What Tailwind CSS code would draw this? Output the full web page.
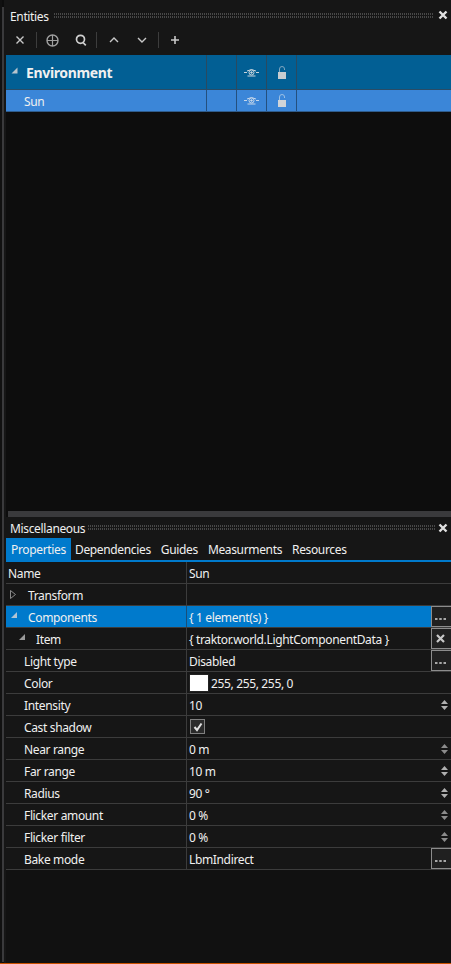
<!DOCTYPE html>
<html lang="en">
<head>
<meta charset="UTF-8" />
<title>Entities</title>
<script src="https://cdn.jsdelivr.net/npm/@tailwindcss/browser@4"></script>
</head>
<body class="bg-[#0d0d0d] w-[451px] h-[964px] overflow-hidden flex flex-col font-['Noto_Sans','Open_Sans',sans-serif] text-[12px] tracking-[-0.35px] text-[#f0f0f0]">
<div class="flex-1 min-h-0 flex">
  <div class="w-[2px] bg-[#111111]"></div>
  <div class="w-[2px] mt-[7px] mb-[1px] bg-[#3a3a3c]"></div>
  <div class="w-[2px] bg-[#161616]"></div>
  <div class="flex-1 min-w-0 flex flex-col">

    <!-- entities panel -->
    <div class="h-[55px] bg-[#161616]">
      <div class="h-[26px] pt-[4px] flex items-center pl-[4px] pr-[3px]">
        <span class="leading-none mt-[4px]">Entities</span>
        <div class="flex-1 flex flex-col gap-[1px] mx-[5px]">
          <div class="h-[2px] bg-[repeating-linear-gradient(90deg,#484848_0,#484848_1px,transparent_1px,transparent_2px)]"></div>
          <div class="h-[2px] bg-[repeating-linear-gradient(90deg,#484848_0,#484848_1px,transparent_1px,transparent_2px)]"></div>
        </div>
        <svg width="10" height="10" viewBox="0 0 10 10"><path d="M1.5 1.5l7 7M8.5 1.5l-7 7" stroke="#e0e0e0" stroke-width="2.4"/></svg>
      </div>
      <div class="h-[28px] flex items-center">
        <svg class="ml-[10px]" width="8" height="8" viewBox="0 0 8 8"><path d="M0.5 0.5l7 7M7.5 0.5l-7 7" stroke="#c8c8c8" stroke-width="1.4"/></svg>
        <div class="w-px h-[16px] bg-[#3d3d3d] ml-[12px]"></div>
        <svg class="ml-[9px]" width="13" height="13" viewBox="0 0 13 13" fill="none" stroke="#a0a0a0"><circle cx="6.5" cy="6.5" r="5.5" stroke-width="1.4"/><path d="M6.5 1v11M1 6.5h11" stroke-width="1.2"/></svg>
        <svg class="ml-[16px]" width="12" height="12" viewBox="0 0 12 12" fill="none" stroke="#d0d0d0" stroke-width="1.7"><circle cx="5.5" cy="5.3" r="4"/><path d="M8 8.500l2.800 2.800"/></svg>
        <div class="w-px h-[16px] bg-[#3d3d3d] ml-[9px]"></div>
        <svg class="ml-[12px]" width="10" height="6" viewBox="0 0 10 6" fill="none" stroke="#c8c8c8" stroke-width="1.4"><path d="M1 5l4-4 4 4"/></svg>
        <svg class="ml-[18px]" width="10" height="6" viewBox="0 0 10 6" fill="none" stroke="#c8c8c8" stroke-width="1.4"><path d="M1 1l4 4 4-4"/></svg>
        <div class="w-px h-[16px] bg-[#3d3d3d] ml-[11px]"></div>
        <svg class="ml-[12px]" width="8" height="8" viewBox="0 0 8 8" stroke="#c8c8c8" stroke-width="1.6"><path d="M4 0v8M0 4h8"/></svg>
      </div>
    </div>

    <!-- entity tree -->
    <div class="h-[35px] bg-[#025f94] border-b border-[#2a4c66] flex">
      <div class="w-[201px] flex items-center border-r border-[#2a4a60]">
        <svg class="ml-[5px] mb-[3px]" width="7" height="7" viewBox="0 0 7 7"><path d="M6.5 0.5v6h-6z" fill="#b8c4cc"/></svg>
        <span class="ml-[8px] mt-[2px] font-bold text-[14px] leading-none">Environment</span>
      </div>
      <div class="w-[30px] border-r border-[#2a4a60]"></div>
      <div class="w-[30px] flex items-center justify-center border-r border-[#2a4a60]"><svg width="15" height="9" viewBox="0 0 15 9" fill="none" stroke="#c8d4dc"><path d="M0 4.5h3M12 4.5h3M3 3q4.500-3 9 0M3.500 8h8"/><circle cx="7.5" cy="4.5" r="2.5"/><circle cx="7.5" cy="4.5" r="0.8" fill="#c8d4dc"/></svg></div>
      <div class="w-[30px] flex items-center justify-center border-r border-[#2a4a60]"><svg width="8" height="13" viewBox="0 0 8 13"><path d="M1.5 6V3a2.5 2.5 0 0 1 5 0V4" fill="none" stroke="#7fa6c0"/><rect y="6" width="8" height="7" fill="#c6ccd0"/></svg></div>
      <div class="flex-1"></div>
    </div>
    <div class="h-[22px] bg-[#3b86d8] border-b border-[#2f5c8c] flex">
      <div class="w-[201px] flex items-center border-r border-[#24507e] pl-[18px]"><span class="leading-none mt-[2px]">Sun</span></div>
      <div class="w-[30px] border-r border-[#24507e]"></div>
      <div class="w-[30px] flex items-center justify-center border-r border-[#24507e]"><svg width="15" height="9" viewBox="0 0 15 9" fill="none" stroke="#c4d6ea"><path d="M0 4.5h3M12 4.5h3M3 3q4.500-3 9 0M3.500 8h8"/><circle cx="7.5" cy="4.5" r="2.5"/><circle cx="7.5" cy="4.5" r="0.8" fill="#c4d6ea"/></svg></div>
      <div class="w-[30px] flex items-center justify-center border-r border-[#24507e]"><svg width="8" height="13" viewBox="0 0 8 13"><path d="M1.5 6V3a2.5 2.5 0 0 1 5 0V4" fill="none" stroke="#9cc0e4"/><rect y="6" width="8" height="7" fill="#d0d4d8"/></svg></div>
      <div class="flex-1"></div>
    </div>
    <div class="h-[399px]"></div>

    <!-- splitter -->
    <div class="h-[6px] ml-[2px] bg-[#3a3a3c]"></div>

    <!-- miscellaneous panel -->
    <div class="flex-1 min-h-0 flex flex-col bg-[#111111]">
      <div class="bg-[#161616]">
        <div class="h-[21px] flex items-center pl-[4px] pr-[3px]">
          <span class="leading-none mt-[2px]">Miscellaneous</span>
          <div class="flex-1 flex flex-col gap-[1px] mx-[3px]">
            <div class="h-[2px] bg-[repeating-linear-gradient(90deg,#484848_0,#484848_1px,transparent_1px,transparent_2px)]"></div>
            <div class="h-[2px] bg-[repeating-linear-gradient(90deg,#484848_0,#484848_1px,transparent_1px,transparent_2px)]"></div>
          </div>
          <svg width="10" height="10" viewBox="0 0 10 10"><path d="M1.5 1.5l7 7M8.5 1.5l-7 7" stroke="#e0e0e0" stroke-width="2.4"/></svg>
        </div>
        <div class="h-[24px] flex border-b-[2px] border-[#007acc]">
          <div class="w-[65px] bg-[#007acc] flex items-center pl-[5px] pt-[2px]">Properties</div>
          <div class="ml-[4px] flex items-center pt-[2px]">Dependencies</div>
          <div class="ml-[10px] flex items-center pt-[2px]">Guides</div>
          <div class="ml-[10px] flex items-center pt-[2px]">Measurments</div>
          <div class="ml-[10px] flex items-center pt-[2px]">Resources</div>
        </div>

        <div class="h-[22px] flex border-b border-[#3c3c3c]">
          <div class="w-[181px] border-r border-[#3c3c3c] flex items-center pl-[2px] pt-[2px]">Name</div>
          <div class="flex-1 flex items-center pl-[2px] pt-[2px]">Sun</div>
        </div>
        <div class="h-[22px] flex border-b border-[#3c3c3c]">
          <div class="w-[181px] border-r border-[#3c3c3c] flex items-center pl-[4px] pt-[2px]">
            <svg class="mb-[2px]" width="6" height="9" viewBox="0 0 6 9"><path d="M0.5 0.5l5 4-5 4z" fill="none" stroke="#8a8a8a"/></svg>
            <span class="ml-[12px]">Transform</span>
          </div>
          <div class="flex-1"></div>
        </div>
        <div class="h-[22px] flex border-b border-[#3c3c3c] bg-[#007acc]">
          <div class="w-[181px] border-r border-[#1a4f78] flex items-center pl-[5px] pt-[2px]">
            <svg class="mb-[5px]" width="6" height="6" viewBox="0 0 6 6"><path d="M6 0v6H0z" fill="#b0c4d4"/></svg>
            <span class="ml-[11px]">Components</span>
          </div>
          <div class="flex-1 flex items-center pl-[2px] pt-[2px]">{ 1 element(s) }</div>
          <div class="w-[20px] bg-[#202020] border border-r-0 border-[#8c8c8c] flex items-center justify-center pt-[5px] pr-[2px]"><svg width="11" height="2" viewBox="0 0 11 2" fill="#a8a8a8"><path d="M0 0h2.500v2H0zM4.250 0h2.500v2h-2.500zM8.500 0H11v2H8.500z"/></svg></div>
        </div>
        <div class="h-[22px] flex border-b border-[#3c3c3c]">
          <div class="w-[181px] border-r border-[#3c3c3c] flex items-center pl-[13px] pt-[2px]">
            <svg class="mb-[5px]" width="6" height="6" viewBox="0 0 6 6"><path d="M6 0v6H0z" fill="#9a9a9a"/></svg>
            <span class="ml-[11px]">Item</span>
          </div>
          <div class="flex-1 flex items-center pl-[2px] pt-[2px]">{ traktor.world.LightComponentData }</div>
          <div class="w-[20px] bg-[#202020] border border-r-0 border-[#8c8c8c] flex items-center justify-center pr-[2px]"><svg width="9" height="9" viewBox="0 0 9 9"><path d="M1 1l7 7M8 1l-7 7" stroke="#c8c8c8" stroke-width="2.2"/></svg></div>
        </div>
        <div class="h-[22px] flex border-b border-[#3c3c3c]">
          <div class="w-[181px] border-r border-[#3c3c3c] flex items-center pl-[18px] pt-[2px]">Light type</div>
          <div class="flex-1 flex items-center pl-[2px] pt-[2px]">Disabled</div>
          <div class="w-[20px] bg-[#202020] border border-r-0 border-[#8c8c8c] flex items-center justify-center pt-[5px] pr-[2px]"><svg width="11" height="2" viewBox="0 0 11 2" fill="#a8a8a8"><path d="M0 0h2.500v2H0zM4.250 0h2.500v2h-2.500zM8.500 0H11v2H8.500z"/></svg></div>
        </div>
        <div class="h-[22px] flex border-b border-[#3c3c3c]">
          <div class="w-[181px] border-r border-[#3c3c3c] flex items-center pl-[18px] pt-[2px]">Color</div>
          <div class="flex-1 flex items-center pl-[2px]"><div class="w-[20px] h-[18px] bg-white border border-[#222222] mr-[2px]"></div><span class="mt-[2px]">255, 255, 255, 0</span></div>
        </div>
        <div class="h-[22px] flex border-b border-[#3c3c3c]">
          <div class="w-[181px] border-r border-[#3c3c3c] flex items-center pl-[18px] pt-[2px]">Intensity</div>
          <div class="flex-1 flex items-center pl-[2px] pt-[2px]">10</div>
          <div class="w-[20px] flex items-center justify-end pr-[3px]"><svg width="7" height="10" viewBox="0 0 7 10" fill="#b0b0b0"><path d="M3.5 0L7 4H0zM3.5 10L0 6h7z"/></svg></div>
        </div>
        <div class="h-[22px] flex border-b border-[#3c3c3c]">
          <div class="w-[181px] border-r border-[#3c3c3c] flex items-center pl-[18px] pt-[2px]">Cast shadow</div>
          <div class="flex-1 flex items-center pl-[3px]"><div class="w-[15px] h-[15px] border-[1.5px] border-[#808080] bg-[#2a2a2a] flex items-center justify-center"><svg width="10" height="10" viewBox="0 0 10 10" fill="none" stroke="#e0e0e0" stroke-width="2"><path d="M1.5 5l2.500 3L8.500 1.500"/></svg></div></div>
        </div>
        <div class="h-[22px] flex border-b border-[#3c3c3c]">
          <div class="w-[181px] border-r border-[#3c3c3c] flex items-center pl-[18px] pt-[2px]">Near range</div>
          <div class="flex-1 flex items-center pl-[2px] pt-[2px]">0 m</div>
          <div class="w-[20px] flex items-center justify-end pr-[3px]"><svg width="7" height="10" viewBox="0 0 7 10" fill="#8c8c8c"><path d="M3.5 0L7 4H0zM3.5 10L0 6h7z"/></svg></div>
        </div>
        <div class="h-[22px] flex border-b border-[#3c3c3c]">
          <div class="w-[181px] border-r border-[#3c3c3c] flex items-center pl-[18px] pt-[2px]">Far range</div>
          <div class="flex-1 flex items-center pl-[2px] pt-[2px]">10 m</div>
          <div class="w-[20px] flex items-center justify-end pr-[3px]"><svg width="7" height="10" viewBox="0 0 7 10" fill="#b0b0b0"><path d="M3.5 0L7 4H0zM3.5 10L0 6h7z"/></svg></div>
        </div>
        <div class="h-[22px] flex border-b border-[#3c3c3c]">
          <div class="w-[181px] border-r border-[#3c3c3c] flex items-center pl-[18px] pt-[2px]">Radius</div>
          <div class="flex-1 flex items-center pl-[2px] pt-[2px]">90 °</div>
          <div class="w-[20px] flex items-center justify-end pr-[3px]"><svg width="7" height="10" viewBox="0 0 7 10" fill="#b0b0b0"><path d="M3.5 0L7 4H0zM3.5 10L0 6h7z"/></svg></div>
        </div>
        <div class="h-[22px] flex border-b border-[#3c3c3c]">
          <div class="w-[181px] border-r border-[#3c3c3c] flex items-center pl-[18px] pt-[2px]">Flicker amount</div>
          <div class="flex-1 flex items-center pl-[2px] pt-[2px]">0 %</div>
          <div class="w-[20px] flex items-center justify-end pr-[3px]"><svg width="7" height="10" viewBox="0 0 7 10" fill="#8c8c8c"><path d="M3.5 0L7 4H0zM3.5 10L0 6h7z"/></svg></div>
        </div>
        <div class="h-[22px] flex border-b border-[#3c3c3c]">
          <div class="w-[181px] border-r border-[#3c3c3c] flex items-center pl-[18px] pt-[2px]">Flicker filter</div>
          <div class="flex-1 flex items-center pl-[2px] pt-[2px]">0 %</div>
          <div class="w-[20px] flex items-center justify-end pr-[3px]"><svg width="7" height="10" viewBox="0 0 7 10" fill="#8c8c8c"><path d="M3.5 0L7 4H0zM3.5 10L0 6h7z"/></svg></div>
        </div>
        <div class="h-[22px] flex border-b border-[#3c3c3c]">
          <div class="w-[181px] border-r border-[#3c3c3c] flex items-center pl-[18px] pt-[2px]">Bake mode</div>
          <div class="flex-1 flex items-center pl-[2px] pt-[2px]">LbmIndirect</div>
          <div class="w-[20px] bg-[#202020] border border-r-0 border-[#8c8c8c] flex items-center justify-center pt-[5px] pr-[2px]"><svg width="11" height="2" viewBox="0 0 11 2" fill="#a8a8a8"><path d="M0 0h2.500v2H0zM4.250 0h2.500v2h-2.500zM8.500 0H11v2H8.500z"/></svg></div>
        </div>
      </div>
    </div>
  </div>
</div>
<!-- status strip -->
<div class="h-[1px] bg-[#ca5100]"></div>
</body>
</html>
